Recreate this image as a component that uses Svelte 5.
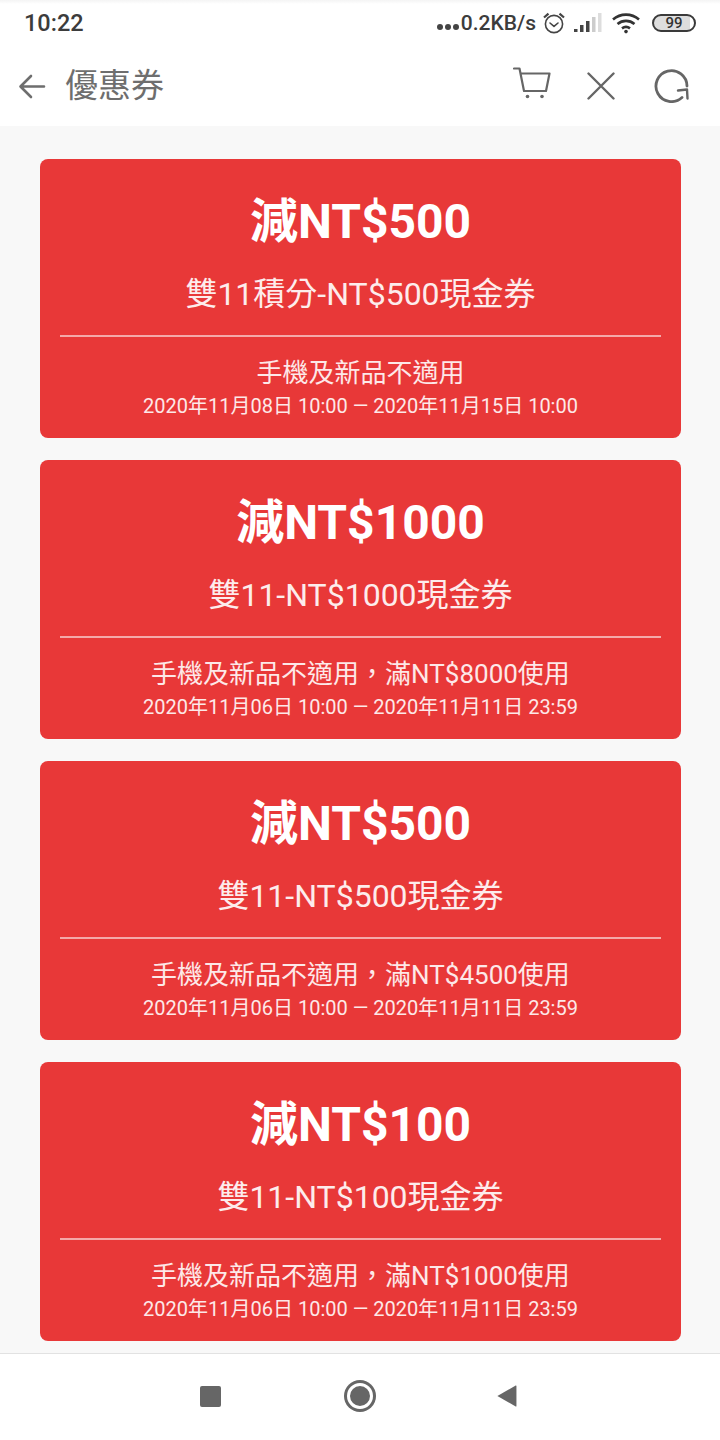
<script>
  const coupons = [
    { t: '減NT$500', s: '雙11積分-NT$500現金券', r: '手機及新品不適用', d: '2020年11月08日 10:00 — 2020年11月15日 10:00' },
    { t: '減NT$1000', s: '雙11-NT$1000現金券', r: '手機及新品不適用，滿NT$8000使用', d: '2020年11月06日 10:00 — 2020年11月11日 23:59' },
    { t: '減NT$500', s: '雙11-NT$500現金券', r: '手機及新品不適用，滿NT$4500使用', d: '2020年11月06日 10:00 — 2020年11月11日 23:59' },
    { t: '減NT$100', s: '雙11-NT$100現金券', r: '手機及新品不適用，滿NT$1000使用', d: '2020年11月06日 10:00 — 2020年11月11日 23:59' }
  ];
</script>

<div class="page">
  <header class="status">
    <span class="time">10:22</span>
    <div class="status-right">
      <span class="dots"><i></i><i></i><i></i></span>
      <span class="speed">0.2KB/s</span>
      <svg class="alarm" width="24" height="24" viewBox="0 0 24 24" fill="none" stroke="#444" stroke-width="1.6">
        <circle cx="12" cy="13" r="8.6"/>
        <path d="M8 12l4 3.4 4-3.4" stroke-linecap="round" stroke-linejoin="round"/>
        <path d="M2 6.5L6.5 2.6M22 6.5L17.5 2.6" stroke-width="2.2"/>
      </svg>
      <svg class="signal" width="28" height="22" viewBox="0 0 28 22">
        <rect x="0" y="17" width="3.5" height="3" fill="#444"/>
        <rect x="6" y="13" width="3.5" height="7" fill="#444"/>
        <rect x="12" y="9" width="3.5" height="11" fill="#444"/>
        <rect x="18" y="5" width="3.5" height="15" fill="#ccc"/>
        <rect x="24" y="1" width="3.5" height="19" fill="#ddd"/>
      </svg>
      <svg class="wifi" width="28" height="22" viewBox="0 0 28 22" fill="none" stroke="#333" stroke-width="2.6">
        <path d="M1 7.5C8.5 1 19.5 1 27 7.5"/>
        <path d="M5.5 12C10.5 7.8 17.5 7.8 22.5 12"/>
        <path d="M10 16.4C12.4 14.6 15.6 14.6 18 16.4"/>
        <circle cx="14" cy="19.6" r="1.8" fill="#333" stroke="none"/>
      </svg>
      <span class="battery">99</span>
    </div>
  </header>

  <nav class="toolbar">
    <svg class="back" width="28" height="28" viewBox="0 0 28 28" fill="none" stroke="#6e6e6e" stroke-width="2.6" stroke-linecap="round" stroke-linejoin="round">
      <path d="M26 14.5H3M13 4L2.5 14.5 13 25"/>
    </svg>
    <span class="title">優惠券</span>
    <div class="actions">
      <svg class="cart" width="38" height="32" viewBox="0 0 38 32" fill="none" stroke="#666" stroke-width="2.2" stroke-linecap="round" stroke-linejoin="round">
        <path d="M1 1.5H6.5L11 24H33L36.5 6.5H8"/>
        <circle cx="14.5" cy="29.5" r="1.8" fill="#666" stroke="none"/>
        <circle cx="29" cy="29.5" r="1.8" fill="#666" stroke="none"/>
      </svg>
      <svg class="close" width="28" height="28" viewBox="0 0 28 28" fill="none" stroke="#666" stroke-width="2.4" stroke-linecap="round">
        <path d="M1.5 1.5L26.5 26.5M26.5 1.5L1.5 26.5"/>
      </svg>
      <svg class="reload" width="36" height="34" viewBox="0 0 36 34" fill="none" stroke="#666" stroke-width="2.8" stroke-linecap="round" stroke-linejoin="round">
        <path d="M33 17A15.5 15.5 0 1 0 28 28.5"/>
        <path d="M24 21.5L33 20.5 33.5 29.5" stroke-width="2.4"/>
      </svg>
    </div>
  </nav>

  <main class="list">
    {#each coupons as c}
      <article class="card">
        <h2>{c.t}</h2>
        <p class="sub">{c.s}</p>
        <hr />
        <p class="rule">{c.r}</p>
        <p class="date">{c.d}</p>
      </article>
    {/each}
  </main>

  <footer class="navbar">
    <span class="square"></span>
    <span class="home"></span>
    <svg class="tri" width="22" height="26" viewBox="0 0 24 26"><path d="M1.5 13L21.5 1.5a.6.6 0 0 1 .8.5V24a.6.6 0 0 1-.8.5z" fill="#666"/></svg>
  </footer>
</div>

<style>
  :global(body) {
    margin: 0;
    background: #fff;
  }
  .page {
    width: 720px;
    height: 1440px;
    display: flex;
    flex-direction: column;
    font-family: Roboto, "Noto Sans CJK TC", sans-serif;
    overflow: hidden;
  }
  .status {
    height: 46px;
    box-sizing: border-box;
    padding: 0 27px 0 24px;
    display: flex;
    align-items: center;
    justify-content: space-between;
    color: #3c3c3c;
    background: linear-gradient(#f4f4f4 0, #fff 4px);
  }
  .time {
    font-size: 23.5px;
    font-weight: 500;
  }
  .status-right {
    display: flex;
    align-items: center;
  }
  .dots {
    display: flex;
    gap: 2px;
    margin-right: 2px;
    align-self: flex-end;
    padding-bottom: 5px;
  }
  .dots i {
    width: 6px;
    height: 6px;
    border-radius: 50%;
    background: #444;
  }
  .speed {
    font-size: 21px;
    font-weight: 500;
    margin-right: 6px;
  }
  .signal {
    margin-left: 8px;
  }
  .wifi {
    margin-left: 10px;
  }
  .battery {
    margin-left: 12px;
    margin-right: -3px;
    width: 44px;
    height: 18px;
    box-sizing: border-box;
    border: 2px solid #3a3a3a;
    border-radius: 9px;
    background: linear-gradient(90deg, #ddd 90%, #fff 90%);
    font-size: 15px;
    line-height: 14px;
    font-weight: 500;
    text-align: center;
    color: #333;
  }
  .toolbar {
    height: 80px;
    display: flex;
    align-items: center;
    padding: 0 30px 0 18px;
  }
  .back {
    flex: none;
  }
  .title {
    margin-left: 19px;
    margin-bottom: 6px;
    font-size: 33px;
    color: #6e6e6e;
  }
  .actions {
    margin-left: auto;
    display: flex;
    align-items: center;
    margin-bottom: 6px;
  }
  .close {
    margin-left: 36px;
    margin-top: 6px;
  }
  .reload {
    margin-left: 39px;
    margin-top: 5px;
  }
  .list {
    flex: 1;
    background: #f8f8f8;
    padding: 33px 39px 0 40px;
    display: flex;
    flex-direction: column;
    gap: 22px;
    border-bottom: 1px solid #e2e2e2;
  }
  .card {
    height: 279px;
    flex: none;
    box-sizing: border-box;
    background: #e83838;
    border-radius: 8px;
    color: #fff;
    text-align: center;
    padding: 0 20px;
    display: flex;
    flex-direction: column;
  }
  h2 {
    margin: 31px 0 0;
    font-size: 48px;
    line-height: 64px;
    font-weight: 700;
  }
  .sub {
    margin: 19px 0 0;
    font-size: 32px;
    line-height: 42px;
    color: #fdecec;
  }
  hr {
    margin: 20px 0 0;
    border: 0;
    height: 2px;
    background: #f4a9a9;
    flex: none;
  }
  .rule {
    margin: 18px 0 0;
    font-size: 26px;
    line-height: 36px;
    color: #fde8e8;
  }
  .date {
    margin: 0;
    font-size: 20px;
    line-height: 31px;
    color: #fde8e8;
  }
  .navbar {
    height: 86px;
    flex: none;
    background: #fff;
    display: flex;
    align-items: center;
    padding: 0 0 2px 200px;
    box-sizing: border-box;
  }
  .square {
    width: 21px;
    height: 21px;
    border-radius: 2px;
    background: #666;
  }
  .home {
    margin-left: 126px;
    width: 20px;
    height: 20px;
    border-radius: 50%;
    background: #666;
    border: 3px solid #fff;
    box-shadow: 0 0 0 3px #666;
  }
  .tri {
    margin-left: 123px;
  }
</style>
